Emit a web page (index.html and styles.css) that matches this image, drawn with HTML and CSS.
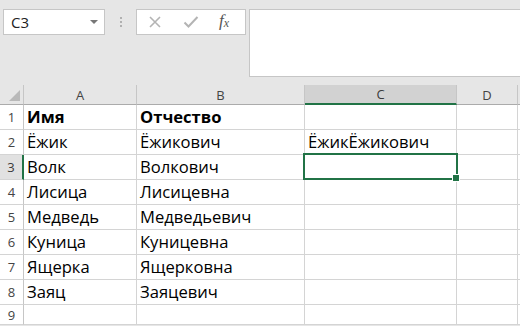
FILE: index.html
```html
<!DOCTYPE html>
<html lang="ru">

<head>
    <meta charset="UTF-8">
    <title>Лист1</title>
    <link rel="stylesheet" href="styles.css">
</head>

<body>
    <div id="app">
        <div class="bar">
            <div class="namebox">
                <span class="ref">C3</span>
                <span class="drop"></span>
            </div>
            <div class="grip"><i></i><i></i><i></i></div>
            <div class="fxbox">
                <svg class="ico" width="14" height="14" viewBox="0 0 14 14"><path d="M2 2L12 12M12 2L2 12" stroke="#b4b4b4" stroke-width="1.6" fill="none"/></svg>
                <svg class="ico" width="16" height="14" viewBox="0 0 16 14"><path d="M1.5 7.5L5.5 11.5L14.5 2" stroke="#b4b4b4" stroke-width="2" fill="none"/></svg>
                <span class="fx">f<sub>x</sub></span>
            </div>
            <div class="formula"></div>
        </div>

        <div class="sheet">
            <div class="corner"><span class="tri"></span></div>
            <div class="ch">A</div>
            <div class="ch">B</div>
            <div class="ch sel">C</div>
            <div class="ch">D</div>
            <div class="ch rest"></div>

            <div class="rh">1</div><div class="c b">Имя</div><div class="c b">Отчество</div><div class="c"></div><div class="c"></div><div class="c rest"></div>
            <div class="rh">2</div><div class="c">Ёжик</div><div class="c">Ёжикович</div><div class="c">ЁжикЁжикович</div><div class="c"></div><div class="c rest"></div>
            <div class="rh sel">3</div><div class="c">Волк</div><div class="c">Волкович</div><div class="c active"><span class="cursor"><span class="handle"></span></span></div><div class="c"></div><div class="c rest"></div>
            <div class="rh">4</div><div class="c">Лисица</div><div class="c">Лисицевна</div><div class="c"></div><div class="c"></div><div class="c rest"></div>
            <div class="rh">5</div><div class="c">Медведь</div><div class="c">Медведьевич</div><div class="c"></div><div class="c"></div><div class="c rest"></div>
            <div class="rh">6</div><div class="c">Куница</div><div class="c">Куницевна</div><div class="c"></div><div class="c"></div><div class="c rest"></div>
            <div class="rh">7</div><div class="c">Ящерка</div><div class="c">Ящерковна</div><div class="c"></div><div class="c"></div><div class="c rest"></div>
            <div class="rh">8</div><div class="c">Заяц</div><div class="c">Заяцевич</div><div class="c"></div><div class="c"></div><div class="c rest"></div>
            <div class="rh">9</div><div class="c"></div><div class="c"></div><div class="c"></div><div class="c"></div><div class="c rest"></div>
        </div>
    </div>
</body>

</html>
```

FILE: styles.css
```css
html,
body {
    margin: 0;
    padding: 0;
    background: #e6e6e6;
    overflow: hidden;
}

#app {
    width: 520px;
    height: 326px;
    overflow: hidden;
}

/* formula bar */
.bar {
    display: flex;
    align-items: flex-start;
    height: 85px;
    padding: 9px 0 0 3px;
    box-sizing: border-box;
}

.namebox {
    display: flex;
    align-items: center;
    justify-content: space-between;
    width: 102px;
    height: 26px;
    box-sizing: border-box;
    background: #fff;
    border: 1px solid #c6c6c6;
    padding: 0 6px 0 7px;
    font-family: "Open Sans", "Noto Sans", sans-serif;
    font-size: 15px;
    color: #222;
}

.drop {
    width: 0;
    height: 0;
    border-left: 4px solid transparent;
    border-right: 4px solid transparent;
    border-top: 4px solid #777;
}

.grip {
    display: flex;
    flex-direction: column;
    gap: 2px;
    width: 31px;
    align-items: center;
    padding-top: 8px;
}

.grip i {
    width: 2px;
    height: 2px;
    background: #b0b0b0;
}

.fxbox {
    display: flex;
    align-items: center;
    width: 110px;
    height: 26px;
    box-sizing: border-box;
    background: #fff;
    border: 1px solid #c6c6c6;
    padding: 0 0 0 11px;
    gap: 21px;
}

.fx {
    font-family: "Liberation Serif", serif;
    font-style: italic;
    font-size: 17px;
    color: #555;
    margin-left: -1px;
    margin-top: -3px;
}

.fx sub {
    font-size: 12px;
    vertical-align: -1px;
}

.formula {
    flex: 1;
    margin-left: 3px;
    margin-right: -4px;
    height: 66px;
    background: #fff;
    border: 1px solid #c6c6c6;
}

/* grid */
.sheet {
    display: grid;
    grid-template-columns: 24px 113px 168px 152px 61px 20px;
    grid-template-rows: 20px repeat(8, 25px) 20px;
    font-family: "Open Sans", "Noto Sans", sans-serif;
    background: #fff;
}

.corner,
.ch {
    background: #e6e6e6;
    border-right: 1px solid #c6c6c6;
    border-bottom: 1px solid #ababab;
    box-sizing: border-box;
}

.corner {
    position: relative;
}

.tri {
    position: absolute;
    right: 3px;
    bottom: 3px;
    width: 0;
    height: 0;
    border-left: 11px solid transparent;
    border-bottom: 11px solid #b9b9b9;
}

.ch {
    display: flex;
    align-items: center;
    justify-content: center;
    font-size: 13px;
    color: #444;
}

.ch.sel {
    background: #d2d2d2;
    border-bottom: 2px solid #217346;
    color: #3a3a3a;
}

.rh {
    display: flex;
    align-items: center;
    justify-content: center;
    background: #fff;
    border-right: 1px solid #c6c6c6;
    border-bottom: 1px solid #d4d4d4;
    box-sizing: border-box;
    font-size: 13px;
    color: #444;
}

.rh.sel {
    background: #e1e1e1;
    border-right: 2px solid #217346;
    color: #3a3a3a;
}

.c {
    display: flex;
    align-items: flex-end;
    padding: 0 0 1px 3px;
    border-right: 1px solid #d4d4d4;
    border-bottom: 1px solid #d4d4d4;
    box-sizing: border-box;
    font-size: 16.6px;
    color: #000;
    white-space: nowrap;
    line-height: 22px;
}

.c.b {
    font-weight: 700;
}

.rest {
    border-right: none;
}

.active {
    position: relative;
}

.cursor {
    position: absolute;
    left: -2px;
    top: -2px;
    width: 155px;
    height: 27px;
    box-sizing: border-box;
    border: 2px solid #217346;
}

.handle {
    position: absolute;
    right: -4px;
    bottom: -4px;
    width: 6px;
    height: 6px;
    background: #217346;
    border: 1px solid #fff;
}
```
